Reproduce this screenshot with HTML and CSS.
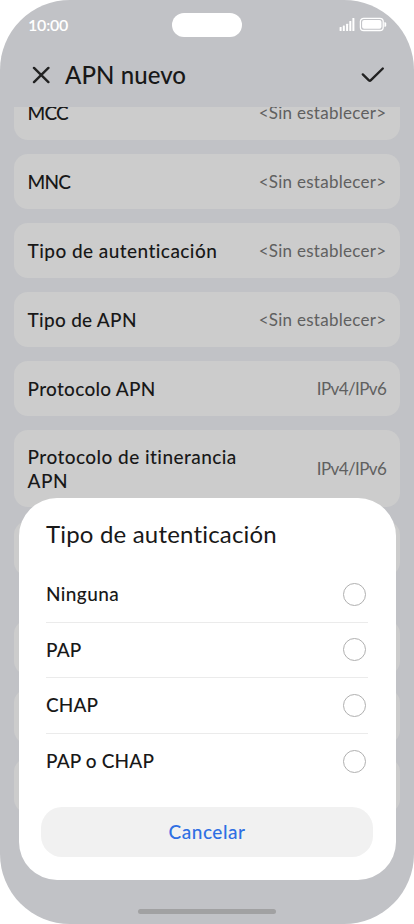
FILE: index.html
```html
<!DOCTYPE html>
<html lang="es">
<head>
<meta charset="utf-8">
<title>APN nuevo</title>
<link rel="stylesheet" href="styles.css">
</head>
<body>
<div class="phone">
  <header class="status">
    <span class="time">10:00</span>
    <span class="island"></span>
    <svg class="status-icons" width="48" height="16" viewBox="0 0 48 16" fill="#fff">
      <rect x="0.6" y="10" width="2" height="4" rx=".5"/>
      <rect x="3.8" y="8.5" width="2" height="5.5" rx=".5"/>
      <rect x="7.1" y="6.7" width="2" height="7.3" rx=".5"/>
      <rect x="10.3" y="4" width="2" height="10" rx=".5"/>
      <rect x="13.4" y="1" width="2" height="13" rx=".5"/>
      <rect x="21.4" y="1.3" width="22.8" height="12.2" rx="3.3" fill="none" stroke="#fff" stroke-width="1.3"/>
      <rect x="23.1" y="3" width="19.4" height="8.8" rx="2"/>
      <path d="M45.4 5.3h.6q1.2 0 1.2 1.2v2q0 1.2-1.2 1.2h-.6z"/>
    </svg>
  </header>
  <div class="titlebar">
    <svg class="close" width="18" height="18" viewBox="0 0 18 18"><path d="M2 1.9 16.4 16.1M16.4 1.9 2 16.1"/></svg>
    <h1>APN nuevo</h1>
    <svg class="check" width="24" height="18" viewBox="0 0 24 18"><path d="M1.8 8.4 7.9 14.3Q8.9 15.2 9.9 14.2L21.8 2.5"/></svg>
  </div>
  <main class="list">
    <div class="card first"><span class="label caps">MCC</span><span class="value">&lt;Sin establecer&gt;</span></div>
    <div class="card"><span class="label caps">MNC</span><span class="value">&lt;Sin establecer&gt;</span></div>
    <div class="card"><span class="label long">Tipo de autenticación</span><span class="value">&lt;Sin establecer&gt;</span></div>
    <div class="card"><span class="label">Tipo de APN</span><span class="value">&lt;Sin establecer&gt;</span></div>
    <div class="card"><span class="label">Protocolo APN</span><span class="value ip">IPv4/IPv6</span></div>
    <div class="card tall"><span class="label long">Protocolo de itinerancia<br>APN</span><span class="value ip">IPv4/IPv6</span></div>
    <div class="card"></div>
    <div class="card section"></div>
    <div class="card"></div>
    <div class="card"></div>
  </main>
  <section class="dialog">
    <h2>Tipo de autenticación</h2>
    <ul class="options">
      <li><span class="wide">Ninguna</span><i class="radio"></i></li>
      <li><span>PAP</span><i class="radio"></i></li>
      <li><span>CHAP</span><i class="radio"></i></li>
      <li><span>PAP o CHAP</span><i class="radio"></i></li>
    </ul>
    <button class="cancel">Cancelar</button>
  </section>
  <div class="home"></div>
</div>
</body>
</html>
```
FILE: styles.css
```css
* { box-sizing: border-box; }
body { margin: 0; background: #fff; font-family: Lato, "Noto Sans", sans-serif; font-variant-ligatures: none; color: #181818; }
.phone { position: relative; width: 414px; height: 924px; overflow: hidden; border-radius: 70px; background: #c1c2c6; }
.status { height: 50px; padding: 0 27px 0 28px; display: flex; align-items: center; justify-content: space-between; }
.time { width: 46.5px; color: #fff; font-size: 16px; font-weight: 600; line-height: 50px; letter-spacing: -.2px; }
.island { width: 70px; height: 24px; border-radius: 12px; background: #fff; }
.status-icons { display: block; }
.titlebar { height: 57px; padding: 0 29px 7px 32px; display: flex; align-items: center; }
.titlebar path { fill: none; stroke: #222; stroke-width: 2.4; stroke-linecap: round; }
h1 { flex: 1; margin: 0 0 0 15px; font-size: 24px; font-weight: 500; line-height: 30px; letter-spacing: .08px; }
.list { height: 817px; padding: 0 14px; overflow: hidden; display: flex; flex-direction: column; gap: 14px; }
.card { flex: none; height: 55px; padding: 0 14px; border-radius: 14px; background: #cccccc; display: flex; align-items: center; justify-content: space-between; }
.first { margin-top: -21.6px; }
.tall { height: 77px; }
.section { margin-top: 30px; }
.label { margin-left: -.4px; font-size: 19px; font-weight: 500; line-height: 24px; letter-spacing: .28px; }
.long { letter-spacing: .44px; }
.caps { letter-spacing: -.8px; }
.value { margin-right: -.3px; font-size: 17px; color: #606060; line-height: 22px; letter-spacing: .27px; }
.ip { letter-spacing: -.6px; }
.dialog { position: absolute; left: 18.5px; top: 498px; width: 377px; height: 382px; border-radius: 38px; background: #fff; padding: 20px 22.5px 23px; display: flex; flex-direction: column; }
h2 { margin: 0 0 17px 5px; font-size: 24px; font-weight: 400; line-height: 32px; letter-spacing: .18px; }
.options { list-style: none; margin: 0 5px; padding: 0; }
.options li { height: 55.5px; padding-right: 2.5px; display: flex; align-items: center; justify-content: space-between; border-bottom: 1px solid #ebebeb; font-size: 19px; font-weight: 500; letter-spacing: .15px; }
.options li:last-child { border-bottom: 0; }
.options span { padding-bottom: 1px; }
.options .wide { letter-spacing: .4px; }
.radio { width: 23px; height: 23px; border: 1.3px solid #b0b0b0; border-radius: 50%; }
.cancel { height: 50px; margin-top: auto; padding: 0 0 2px; border: 0; border-radius: 21px; background: #f1f1f1; color: #2e6fe3; font: 500 19px Lato, sans-serif; letter-spacing: .5px; }
.home { position: absolute; left: 138px; bottom: 10px; width: 138px; height: 5px; border-radius: 3px; background: #a1a1a2; }
```
